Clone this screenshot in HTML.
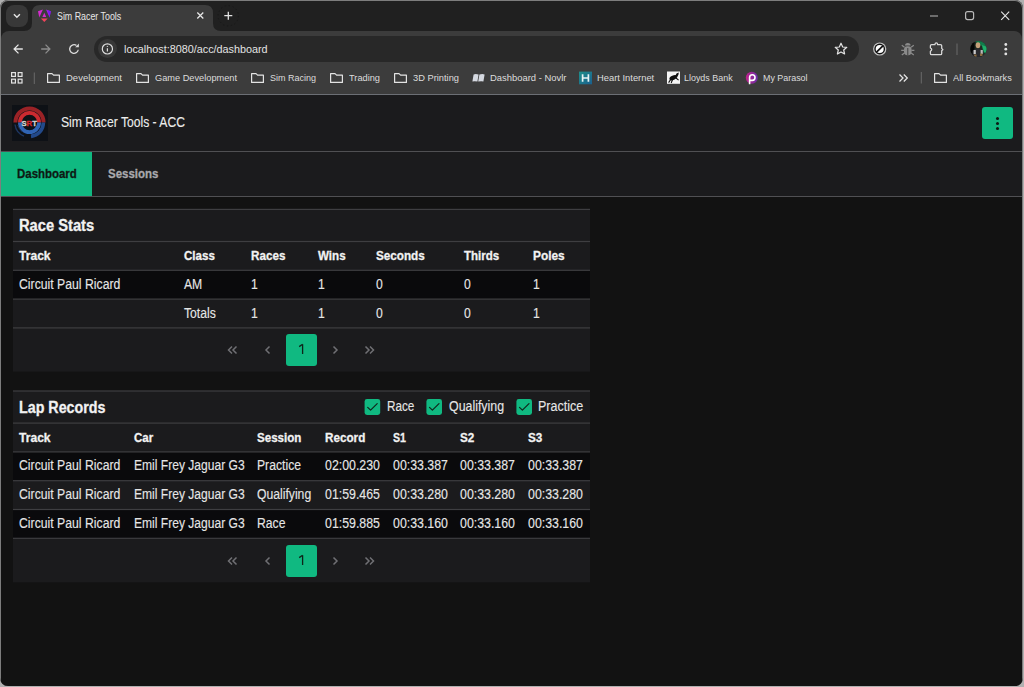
<!DOCTYPE html>
<html><head><meta charset="utf-8">
<style>
*{box-sizing:border-box;margin:0;padding:0}
html,body{width:1024px;height:687px;overflow:hidden;background:#b0b0b0;font-family:"Liberation Sans",sans-serif}
.a{position:absolute}
#win{position:absolute;left:0;top:0;width:1023px;height:686px;background:#202020;border-radius:8px;overflow:hidden;box-shadow:inset 0 0 0 1px #7d7d7d}
.t{position:absolute;white-space:nowrap;line-height:normal;transform-origin:0 0}
.t.bd{-webkit-text-stroke:0.3px currentColor}
.t.rg{-webkit-text-stroke:0.12px currentColor}
svg{position:absolute;overflow:visible}
.card{position:absolute;left:13px;width:577px;background:#1b1b1d}
.ln{position:absolute;left:0;width:100%;height:1px;background:#3b3b3e}
.dk{position:absolute;left:0;width:100%;height:28px;background:#0c0c0e}
.chev{position:absolute}
.gbtn{position:absolute;left:273px;width:31px;height:32px;background:#10b981;border-radius:3px}
.cb{position:absolute;top:399px;width:16px;height:16px;background:#10b981;border-radius:3px}
</style></head><body>
<div id="win">
 <!-- tab strip -->
 <div class="a" style="left:6px;top:5px;width:22px;height:22px;background:#383838;border-radius:8px"></div>
 <svg style="left:0;top:0" width="1024" height="40">
  <path d="M13.9 14.2 L16.9 17.2 L19.9 14.2" stroke="#e3e3e3" stroke-width="1.4" fill="none"/>
 </svg>
 <!-- active tab -->
 <svg style="left:0;top:0" width="260" height="34">
  <path d="M24 31 Q32 31 32 23 L32 13 Q32 5 40 5 L205 5 Q213 5 213 13 L213 23 Q213 31 221 31 Z" fill="#3c3c3c"/>
  <!-- favicon angular -->
  <path d="M38 11.2 L42.9 9.5 L39.3 17.6 Z" fill="#d62ad0"/>
  <path d="M46 9.5 L50.8 11.2 L49.6 17.6 Z" fill="#a222e6"/>
  <path d="M47.6 10.2 L50.8 11.2 L49.6 17.6 Z" fill="#7a1af0"/>
  <path d="M44.3 12.8 L46.2 16.9 L42.4 16.9 Z" fill="#d82ad0"/>
  <path d="M40.9 18.5 L47.7 18.5 L44.3 22 Z" fill="#f0445a"/>
  <!-- close x -->
  <path d="M197.3 12.5 L203.3 18.5 M203.3 12.5 L197.3 18.5" stroke="#e3e3e3" stroke-width="1.3"/>
  <!-- plus -->
  <path d="M228.3 11.7 L228.3 19.7 M224.3 15.7 L232.3 15.7" stroke="#e3e3e3" stroke-width="1.3"/>
  <circle cx="228.3" cy="15.8" r="10.2" stroke="#161616" stroke-width="0.6" stroke-dasharray="1.5 2.5" fill="none"/>
 </svg>
 <!-- window controls -->
 <svg style="left:0;top:0" width="1024" height="34">
  <path d="M930 16 L938 16" stroke="#b8b8b8" stroke-width="1.2"/>
  <rect x="965.6" y="11.6" width="8" height="8" rx="2" stroke="#b8b8b8" stroke-width="1.2" fill="none"/>
  <path d="M1001.2 11.6 L1009.2 19.8 M1009.2 11.6 L1001.2 19.8" stroke="#e6e6e6" stroke-width="1.1"/>
 </svg>

 <!-- toolbar + bookmarks -->
 <div class="a" style="left:1px;top:31px;width:1021px;height:63px;background:#3c3c3c;border-radius:8px 8px 0 0"></div>
 <div class="a" style="left:1px;top:94px;width:1021px;height:1px;background:#6c6f75"></div>
 <svg style="left:0;top:0" width="1024" height="100">
  <!-- back -->
  <path d="M14.2 49 L22.8 49 M18.5 44.6 L14.1 49 L18.5 53.4" stroke="#e3e3e3" stroke-width="1.3" fill="none"/>
  <!-- forward -->
  <path d="M41.2 49 L49.8 49 M45.5 44.6 L49.9 49 L45.5 53.4" stroke="#8a8a8a" stroke-width="1.3" fill="none"/>
  <!-- reload -->
  <path d="M78.25 49.75 A4.3 4.3 0 1 1 76.4 45.4" stroke="#dcdcdc" stroke-width="1.3" fill="none"/>
  <path d="M78.9 43.6 L78.9 47.3 L75.2 47.3 Z" fill="#dcdcdc"/>
 </svg>
 <!-- omnibox -->
 <div class="a" style="left:94px;top:36px;width:765px;height:26px;background:#282828;border-radius:13px"></div>
 <div class="a" style="left:97.9px;top:39.4px;width:19px;height:19px;background:#383838;border-radius:10px"></div>
 <svg style="left:0;top:0" width="1024" height="100">
  <circle cx="107.4" cy="48.9" r="5.1" stroke="#dcdcdc" stroke-width="1.2" fill="none"/>
  <path d="M107.4 48.3 L107.4 51.6" stroke="#dcdcdc" stroke-width="1.2"/>
  <circle cx="107.4" cy="46.4" r="0.7" fill="#bdbdbd"/>
  <!-- star -->
  <path d="M841 43.2 L842.7 47 L846.8 47.3 L843.7 50 L844.6 54 L841 51.9 L837.4 54 L838.3 50 L835.2 47.3 L839.3 47 Z" stroke="#e3e3e3" stroke-width="1.2" fill="none" stroke-linejoin="round"/>
  <!-- block icon -->
  <circle cx="879.7" cy="49" r="6.6" fill="#c4c4c4"/>
  <circle cx="879.7" cy="49" r="5.4" fill="#111111"/>
  <circle cx="879.7" cy="49" r="4.0" fill="#ffffff"/>
  <path d="M876.5 52.2 L882.9 45.8" stroke="#111111" stroke-width="1.7"/>
  <!-- bug -->
  <g fill="#8a8a8a">
   <path d="M905 45.6 Q905 42.9 907.8 42.9 Q910.6 42.9 910.6 45.6 Z"/>
   <rect x="904" y="46.3" width="7.6" height="8.9" rx="3.4"/>
  </g>
  <path d="M907.8 48 L907.8 55.2" stroke="#3c3c3c" stroke-width="1"/>
  <path d="M901.8 45.3 L904.5 47.3 M913.8 45.3 L911.1 47.3 M901.2 50.3 L904.2 50.3 M914.4 50.3 L911.4 50.3 M901.8 55 L904.5 53 M913.8 55 L911.1 53" stroke="#8a8a8a" stroke-width="1.3"/>
  <!-- puzzle -->
  <path d="M931.6 44.6 L934.9 44.6 Q935.1 42.9 936.3 42.9 Q937.5 42.9 937.7 44.6 L940.5 44.6 Q941.7 44.6 941.7 45.8 L941.7 48.4 L942.9 49.6 L941.7 50.8 L941.7 53.4 Q941.7 54.7 940.5 54.7 L931.6 54.7 Q930.4 54.7 930.4 53.4 L930.4 51.3 Q931.7 50.6 931.7 49.6 Q931.7 48.6 930.4 47.9 L930.4 45.8 Q930.4 44.6 931.6 44.6 Z" stroke="#d8d8d8" stroke-width="1.3" fill="none" stroke-linejoin="round"/>
  <!-- sep -->
  <path d="M957 43.5 L957 55" stroke="#6a6a6a" stroke-width="1"/>
  <!-- menu dots -->
  <circle cx="1005.8" cy="44.5" r="1.4" fill="#e3e3e3"/>
  <circle cx="1005.8" cy="49.2" r="1.4" fill="#e3e3e3"/>
  <circle cx="1005.8" cy="53.9" r="1.4" fill="#e3e3e3"/>
 </svg>
 <!-- avatar -->
 <svg style="left:0;top:0" width="1024" height="100">
  <defs><clipPath id="avc"><circle cx="978.4" cy="49" r="8.1"/></clipPath></defs>
  <g clip-path="url(#avc)">
   <rect x="970" y="40" width="17" height="18" fill="#1e2a22"/>
   <path d="M974 40 L987 40 L987 55 L983 52 L982 46 L978 44 Z" fill="#127a4a"/>
   <path d="M982 45 L987 47 L987 53 L984 52 Z" fill="#1fae6a"/>
   <rect x="970" y="40" width="4.5" height="18" fill="#050505"/>
   <ellipse cx="978" cy="45.3" rx="2.3" ry="3" fill="#c4a07a"/>
   <path d="M972.5 58 L972.5 51 Q974 48.5 978 48.5 Q982 48.5 983.5 51 L983.5 58 Z" fill="#2a2a2e"/>
   <rect x="973.6" y="50" width="2.2" height="4" fill="#c8c8c8"/>
   <rect x="980.6" y="50" width="2.2" height="4" fill="#b8b8b8"/>
   <rect x="974" y="54.5" width="2.5" height="2.5" fill="#8a6a40"/>
   <rect x="980" y="53.5" width="2.5" height="2.5" fill="#8a6a40"/>
  </g>
 </svg>

 <!-- bookmarks icons -->
 <svg style="left:0;top:0" width="1024" height="100">
  <g stroke="#e3e3e3" stroke-width="1.2" fill="none">
   <rect x="11.6" y="72.6" width="3.8" height="3.8"/>
   <rect x="18.2" y="72.6" width="3.8" height="3.8"/>
   <rect x="11.6" y="79.2" width="3.8" height="3.8"/>
   <rect x="18.2" y="79.2" width="3.8" height="3.8"/>
  </g>
  <path d="M34.3 72.5 L34.3 84" stroke="#6a6a6a"/>
  <g id="fold" stroke="#e3e3e3" stroke-width="1.2" fill="none" stroke-linejoin="round">
   <path d="M47.6 73.6 L52 73.6 L53.6 75.2 L59.4 75.2 L59.4 82.4 L47.6 82.4 Z"/>
   <path d="M136.6 73.6 L141 73.6 L142.6 75.2 L148.4 75.2 L148.4 82.4 L136.6 82.4 Z"/>
   <path d="M251.6 73.6 L256 73.6 L257.6 75.2 L263.4 75.2 L263.4 82.4 L251.6 82.4 Z"/>
   <path d="M330.6 73.6 L335 73.6 L336.6 75.2 L342.4 75.2 L342.4 82.4 L330.6 82.4 Z"/>
   <path d="M394.6 73.6 L399 73.6 L400.6 75.2 L406.4 75.2 L406.4 82.4 L394.6 82.4 Z"/>
   <path d="M934.6 73.6 L939 73.6 L940.6 75.2 L946.4 75.2 L946.4 82.4 L934.6 82.4 Z"/>
  </g>
  <!-- novlr book -->
  <path d="M473.6 74.4 Q476 73.6 478.6 74.6 L477.4 81.6 Q475 80.8 472.4 81.4 Z" fill="#d4d8e0"/>
  <path d="M479.4 74.6 Q482 73.6 484.6 74.4 L483.4 81.4 Q480.8 80.8 478.2 81.6 Z" fill="#d4d8e0"/>
  <!-- heart internet -->
  <defs><linearGradient id="hig" x1="0" y1="0" x2="1" y2="1"><stop offset="0" stop-color="#1f8f8a"/><stop offset="1" stop-color="#1a5f8e"/></linearGradient>
  <linearGradient id="pag" x1="0" y1="0" x2="1" y2="0"><stop offset="0" stop-color="#c0208a"/><stop offset="1" stop-color="#6a2ea8"/></linearGradient></defs>
  <rect x="579" y="71.6" width="13" height="12.7" fill="url(#hig)"/>
  <path d="M582.6 74.2 L582.6 81.8 M588.4 74.2 L588.4 81.8 M582.6 78 L588.4 78" stroke="#e8f4f4" stroke-width="1.7"/>
  <!-- lloyds -->
  <rect x="667" y="71.5" width="13" height="12.3" fill="#f4f4f4"/>
  <ellipse cx="673.2" cy="77.8" rx="4" ry="2.2" transform="rotate(-25 673.2 77.8)" fill="#101010"/>
  <path d="M675 76.5 L676.5 73.5 L678.8 72.6 L678.4 74.8 L677 77.5 Z" fill="#101010"/>
  <path d="M676 78 L678.6 80.2 M671 79 L668.6 82.6 M672.6 79.4 L671.2 83" stroke="#101010" stroke-width="1.1" fill="none"/>
  <!-- parasol -->
  <circle cx="751.8" cy="77.8" r="6" fill="url(#pag)"/>
  <path d="M749.6 84.2 L749.6 77.6 Q749.6 74.8 752.3 74.8 Q755 74.8 755 77.6 Q755 80.4 752.3 80.4 L749.6 80.4" stroke="#ffffff" stroke-width="1.6" fill="none"/>
  <!-- chevrons >> -->
  <path d="M899.5 74.5 L903 78 L899.5 81.5 M903.8 74.5 L907.3 78 L903.8 81.5" stroke="#e3e3e3" stroke-width="1.3" fill="none"/>
  <path d="M921.3 72 L921.3 83.5" stroke="#6a6a6a"/>
 </svg>

 <!-- ================= page ================= -->
 <div class="a" style="left:1px;top:95px;width:1021px;height:591px;background:#121212"></div>
 <div class="a" style="left:1px;top:95px;width:1021px;height:56px;background:#1b1b1d"></div>
 <div class="a" style="left:1px;top:151px;width:1021px;height:1px;background:#505053"></div>
 <div class="a" style="left:1px;top:152px;width:1021px;height:44px;background:#1b1b1d"></div>
 <div class="a" style="left:1px;top:152px;width:91px;height:44px;background:#10b981"></div>
 <div class="a" style="left:1px;top:196px;width:1021px;height:1px;background:#505053"></div>

 <!-- logo -->
 <div class="a" style="left:12px;top:105px;width:36px;height:36px;background:#0e1116"></div>
 <svg style="left:12px;top:105px" width="36" height="36" viewBox="0 0 36 36">
  <path d="M3.4 17.5 A14.1 14.1 0 0 1 31.6 17.5" stroke="#9a2226" stroke-width="4" fill="none"/>
  <path d="M7.9 17.5 A9.6 9.6 0 0 1 27.1 17.5" stroke="#cc2a30" stroke-width="3.8" fill="none"/>
  <path d="M7.9 17.5 A9.6 9.6 0 0 0 27.1 17.5" stroke="#3064b4" stroke-width="3.8" fill="none"/>
  <path d="M31.4 17.5 A13.9 13.9 0 0 1 19 31.4" stroke="#22498a" stroke-width="3.6" fill="none"/>
  <path d="M3 19.5 A14.6 14.6 0 0 0 12 31.2" stroke="#1d3560" stroke-width="1.4" fill="none"/>
  <path d="M5.8 20 A12 12 0 0 0 10.5 27" stroke="#1d3560" stroke-width="1" fill="none"/>
  <g font-family="Liberation Sans" font-weight="bold" font-size="7.8" stroke-width="0.3">
  <text x="9.4" y="20.8" fill="#d4d4d4" stroke="#d4d4d4">S</text>
  <text x="14.6" y="20.8" fill="#d8262c" stroke="#d8262c">R</text>
  <text x="20.2" y="20.8" fill="#d4d4d4" stroke="#d4d4d4">T</text>
  </g>
 </svg>

 <!-- menu btn -->
 <div class="a" style="left:982px;top:107px;width:31px;height:32px;background:#10b981;border-radius:3px"></div>
 <div class="a" style="left:996.2px;top:116.5px;width:3px;height:3px;border-radius:50%;background:#0d1a14"></div>
 <div class="a" style="left:996.2px;top:121.5px;width:3px;height:3px;border-radius:50%;background:#0d1a14"></div>
 <div class="a" style="left:996.2px;top:126.5px;width:3px;height:3px;border-radius:50%;background:#0d1a14"></div>

 <!-- cards -->
 <svg style="left:0;top:0" width="1024" height="687">
   <rect x="13" y="209.4" width="577" height="162.2" fill="#1b1b1d"/>
   <rect x="13" y="270.2" width="577" height="28.8" fill="#0a0a0c"/>
   <rect x="13" y="208.80" width="577" height="1.2" fill="#3e3e41"/>
   <rect x="13" y="240.90" width="577" height="1.2" fill="#3e3e41"/>
   <rect x="13" y="269.70" width="577" height="1.2" fill="#3e3e41"/>
   <rect x="13" y="298.50" width="577" height="1.2" fill="#3e3e41"/>
   <rect x="13" y="327.30" width="577" height="1.2" fill="#3e3e41"/>
   <g stroke="#707074" stroke-width="1.5" fill="none">
    <path d="M232 346.5 L228.5 350 L232 353.5 M236.5 346.5 L233 350 L236.5 353.5"/>
    <path d="M269.5 346.5 L266 350 L269.5 353.5"/>
    <path d="M333.5 346.5 L337 350 L333.5 353.5"/>
    <path d="M365.5 346.5 L369 350 L365.5 353.5 M370 346.5 L373.5 350 L370 353.5"/>
   </g>
   <rect x="286" y="334" width="31" height="32" rx="3" fill="#10b981"/>
   <path d="M302.6 344.3 L302.6 354 M299.2 346.6 L302.6 344.3" stroke="#0e2419" stroke-width="1.3" fill="none"/>

   <rect x="13" y="391" width="577" height="191.4" fill="#1b1b1d"/>
   <rect x="13" y="451.9" width="577" height="28.8" fill="#0a0a0c"/>
   <rect x="13" y="509.5" width="577" height="28.8" fill="#0a0a0c"/>
   <rect x="13" y="390.40" width="577" height="1.2" fill="#3e3e41"/>
   <rect x="13" y="422.50" width="577" height="1.2" fill="#3e3e41"/>
   <rect x="13" y="451.30" width="577" height="1.2" fill="#3e3e41"/>
   <rect x="13" y="480.10" width="577" height="1.2" fill="#3e3e41"/>
   <rect x="13" y="508.90" width="577" height="1.2" fill="#3e3e41"/>
   <rect x="13" y="537.70" width="577" height="1.2" fill="#3e3e41"/>
   <g stroke="#707074" stroke-width="1.5" fill="none">
    <path d="M232 557.5 L228.5 561 L232 564.5 M236.5 557.5 L233 561 L236.5 564.5"/>
    <path d="M269.5 557.5 L266 561 L269.5 564.5"/>
    <path d="M333.5 557.5 L337 561 L333.5 564.5"/>
    <path d="M365.5 557.5 L369 561 L365.5 564.5 M370 557.5 L373.5 561 L370 564.5"/>
   </g>
   <rect x="286" y="545" width="31" height="32" rx="3" fill="#10b981"/>
   <path d="M302.6 555.3 L302.6 565 M299.2 557.6 L302.6 555.3" stroke="#0e2419" stroke-width="1.3" fill="none"/>

 </svg>
 <svg style="left:0;top:0" width="1024" height="687">
  <g fill="#10b981">
   <rect x="364.6" y="399.1" width="15.6" height="15.8" rx="2.4"/>
   <rect x="426.4" y="399.1" width="15.6" height="15.8" rx="2.4"/>
   <rect x="516.4" y="399.1" width="15.6" height="15.8" rx="2.4"/>
  </g>
  <g stroke="#10261c" stroke-width="1.2" fill="none" stroke-linecap="round" stroke-linejoin="round">
   <path d="M367.7 407.3 L370.6 410.2 L377.2 403.6"/>
   <path d="M429.5 407.3 L432.4 410.2 L439 403.6"/>
   <path d="M519.5 407.3 L522.4 410.2 L529 403.6"/>
  </g>
 </svg>

<div class="t" style="left:56.9px;top:10.0px;font-size:10.5px;font-weight:400;color:#e8e8e8;transform:scaleX(0.842)">Sim Racer Tools</div>
<div class="t" style="left:123.5px;top:43.0px;font-size:11.5px;font-weight:400;color:#e3e3e3;transform:scaleX(0.940)">localhost:8080/acc/dashboard</div>
<div class="t" style="left:66.0px;top:72.3px;font-size:9.5px;font-weight:400;color:#dcdcdc;transform:scaleX(1.000)">Development</div>
<div class="t" style="left:155.0px;top:72.3px;font-size:9.5px;font-weight:400;color:#dcdcdc;transform:scaleX(0.971)">Game Development</div>
<div class="t" style="left:270.0px;top:72.3px;font-size:9.5px;font-weight:400;color:#dcdcdc;transform:scaleX(0.947)">Sim Racing</div>
<div class="t" style="left:349.0px;top:72.3px;font-size:9.5px;font-weight:400;color:#dcdcdc;transform:scaleX(0.973)">Trading</div>
<div class="t" style="left:413.0px;top:72.3px;font-size:9.5px;font-weight:400;color:#dcdcdc;transform:scaleX(0.979)">3D Printing</div>
<div class="t" style="left:489.5px;top:72.3px;font-size:9.5px;font-weight:400;color:#dcdcdc;transform:scaleX(0.992)">Dashboard - Novlr</div>
<div class="t" style="left:596.8px;top:72.3px;font-size:9.5px;font-weight:400;color:#dcdcdc;transform:scaleX(0.985)">Heart Internet</div>
<div class="t" style="left:684.0px;top:72.3px;font-size:9.5px;font-weight:400;color:#dcdcdc;transform:scaleX(0.939)">Lloyds Bank</div>
<div class="t" style="left:763.0px;top:72.3px;font-size:9.5px;font-weight:400;color:#dcdcdc;transform:scaleX(0.937)">My Parasol</div>
<div class="t" style="left:953.0px;top:72.3px;font-size:9.5px;font-weight:400;color:#dcdcdc;transform:scaleX(0.968)">All Bookmarks</div>
<div class="t rg" style="left:60.5px;top:114.0px;font-size:14px;font-weight:400;color:#ececec;transform:scaleX(0.868)">Sim Racer Tools - ACC</div>
<div class="t bd" style="left:16.6px;top:165.5px;font-size:13px;font-weight:700;color:#0d1a14;transform:scaleX(0.881)">Dashboard</div>
<div class="t bd" style="left:108.0px;top:165.5px;font-size:13px;font-weight:700;color:#a9a9ad;transform:scaleX(0.883)">Sessions</div>
<div class="t bd" style="left:19.4px;top:217.0px;font-size:16px;font-weight:700;color:#f2f2f2;transform:scaleX(0.919)">Race Stats</div>
<div class="t bd" style="left:19.4px;top:248.0px;font-size:13px;font-weight:700;color:#f2f2f2;transform:scaleX(0.930)">Track</div>
<div class="t bd" style="left:183.9px;top:248.0px;font-size:13px;font-weight:700;color:#f2f2f2;transform:scaleX(0.890)">Class</div>
<div class="t bd" style="left:251.2px;top:248.0px;font-size:13px;font-weight:700;color:#f2f2f2;transform:scaleX(0.898)">Races</div>
<div class="t bd" style="left:318.4px;top:248.0px;font-size:13px;font-weight:700;color:#f2f2f2;transform:scaleX(0.892)">Wins</div>
<div class="t bd" style="left:376.0px;top:248.0px;font-size:13px;font-weight:700;color:#f2f2f2;transform:scaleX(0.900)">Seconds</div>
<div class="t bd" style="left:464.2px;top:248.0px;font-size:13px;font-weight:700;color:#f2f2f2;transform:scaleX(0.886)">Thirds</div>
<div class="t bd" style="left:532.9px;top:248.0px;font-size:13px;font-weight:700;color:#f2f2f2;transform:scaleX(0.911)">Poles</div>
<div class="t rg" style="left:19.4px;top:276.0px;font-size:14px;font-weight:400;color:#e6e6e6;transform:scaleX(0.874)">Circuit Paul Ricard</div>
<div class="t rg" style="left:183.9px;top:276.0px;font-size:14px;font-weight:400;color:#e6e6e6;transform:scaleX(0.870)">AM</div>
<div class="t rg" style="left:251.2px;top:276.0px;font-size:14px;font-weight:400;color:#e6e6e6;transform:scaleX(0.870)">1</div>
<div class="t rg" style="left:318.4px;top:276.0px;font-size:14px;font-weight:400;color:#e6e6e6;transform:scaleX(0.870)">1</div>
<div class="t rg" style="left:376.0px;top:276.0px;font-size:14px;font-weight:400;color:#e6e6e6;transform:scaleX(0.870)">0</div>
<div class="t rg" style="left:464.2px;top:276.0px;font-size:14px;font-weight:400;color:#e6e6e6;transform:scaleX(0.870)">0</div>
<div class="t rg" style="left:532.9px;top:276.0px;font-size:14px;font-weight:400;color:#e6e6e6;transform:scaleX(0.870)">1</div>
<div class="t rg" style="left:183.9px;top:305.0px;font-size:14px;font-weight:400;color:#e6e6e6;transform:scaleX(0.870)">Totals</div>
<div class="t rg" style="left:251.2px;top:305.0px;font-size:14px;font-weight:400;color:#e6e6e6;transform:scaleX(0.870)">1</div>
<div class="t rg" style="left:318.4px;top:305.0px;font-size:14px;font-weight:400;color:#e6e6e6;transform:scaleX(0.870)">1</div>
<div class="t rg" style="left:376.0px;top:305.0px;font-size:14px;font-weight:400;color:#e6e6e6;transform:scaleX(0.870)">0</div>
<div class="t rg" style="left:464.2px;top:305.0px;font-size:14px;font-weight:400;color:#e6e6e6;transform:scaleX(0.870)">0</div>
<div class="t rg" style="left:532.9px;top:305.0px;font-size:14px;font-weight:400;color:#e6e6e6;transform:scaleX(0.870)">1</div>
<div class="t bd" style="left:19.4px;top:399.0px;font-size:16px;font-weight:700;color:#f2f2f2;transform:scaleX(0.892)">Lap Records</div>
<div class="t rg" style="left:386.6px;top:398.0px;font-size:14px;font-weight:400;color:#e6e6e6;transform:scaleX(0.838)">Race</div>
<div class="t rg" style="left:448.7px;top:398.0px;font-size:14px;font-weight:400;color:#e6e6e6;transform:scaleX(0.885)">Qualifying</div>
<div class="t rg" style="left:538.3px;top:398.0px;font-size:14px;font-weight:400;color:#e6e6e6;transform:scaleX(0.894)">Practice</div>
<div class="t bd" style="left:19.4px;top:430.0px;font-size:13px;font-weight:700;color:#f2f2f2;transform:scaleX(0.930)">Track</div>
<div class="t bd" style="left:133.6px;top:430.0px;font-size:13px;font-weight:700;color:#f2f2f2;transform:scaleX(0.885)">Car</div>
<div class="t bd" style="left:256.6px;top:430.0px;font-size:13px;font-weight:700;color:#f2f2f2;transform:scaleX(0.891)">Session</div>
<div class="t bd" style="left:324.6px;top:430.0px;font-size:13px;font-weight:700;color:#f2f2f2;transform:scaleX(0.900)">Record</div>
<div class="t bd" style="left:392.6px;top:430.0px;font-size:13px;font-weight:700;color:#f2f2f2;transform:scaleX(0.817)">S1</div>
<div class="t bd" style="left:460.2px;top:430.0px;font-size:13px;font-weight:700;color:#f2f2f2;transform:scaleX(0.900)">S2</div>
<div class="t bd" style="left:528.0px;top:430.0px;font-size:13px;font-weight:700;color:#f2f2f2;transform:scaleX(0.900)">S3</div>
<div class="t rg" style="left:19.4px;top:457.0px;font-size:14px;font-weight:400;color:#e6e6e6;transform:scaleX(0.874)">Circuit Paul Ricard</div>
<div class="t rg" style="left:133.6px;top:457.0px;font-size:14px;font-weight:400;color:#e6e6e6;transform:scaleX(0.862)">Emil Frey Jaguar G3</div>
<div class="t rg" style="left:256.6px;top:457.0px;font-size:14px;font-weight:400;color:#e6e6e6;transform:scaleX(0.870)">Practice</div>
<div class="t rg" style="left:324.6px;top:457.0px;font-size:14px;font-weight:400;color:#e6e6e6;transform:scaleX(0.883)">02:00.230</div>
<div class="t rg" style="left:392.6px;top:457.0px;font-size:14px;font-weight:400;color:#e6e6e6;transform:scaleX(0.883)">00:33.387</div>
<div class="t rg" style="left:460.2px;top:457.0px;font-size:14px;font-weight:400;color:#e6e6e6;transform:scaleX(0.883)">00:33.387</div>
<div class="t rg" style="left:528.0px;top:457.0px;font-size:14px;font-weight:400;color:#e6e6e6;transform:scaleX(0.883)">00:33.387</div>
<div class="t rg" style="left:19.4px;top:486.0px;font-size:14px;font-weight:400;color:#e6e6e6;transform:scaleX(0.874)">Circuit Paul Ricard</div>
<div class="t rg" style="left:133.6px;top:486.0px;font-size:14px;font-weight:400;color:#e6e6e6;transform:scaleX(0.862)">Emil Frey Jaguar G3</div>
<div class="t rg" style="left:256.6px;top:486.0px;font-size:14px;font-weight:400;color:#e6e6e6;transform:scaleX(0.870)">Qualifying</div>
<div class="t rg" style="left:324.6px;top:486.0px;font-size:14px;font-weight:400;color:#e6e6e6;transform:scaleX(0.883)">01:59.465</div>
<div class="t rg" style="left:392.6px;top:486.0px;font-size:14px;font-weight:400;color:#e6e6e6;transform:scaleX(0.883)">00:33.280</div>
<div class="t rg" style="left:460.2px;top:486.0px;font-size:14px;font-weight:400;color:#e6e6e6;transform:scaleX(0.883)">00:33.280</div>
<div class="t rg" style="left:528.0px;top:486.0px;font-size:14px;font-weight:400;color:#e6e6e6;transform:scaleX(0.883)">00:33.280</div>
<div class="t rg" style="left:19.4px;top:515.0px;font-size:14px;font-weight:400;color:#e6e6e6;transform:scaleX(0.874)">Circuit Paul Ricard</div>
<div class="t rg" style="left:133.6px;top:515.0px;font-size:14px;font-weight:400;color:#e6e6e6;transform:scaleX(0.862)">Emil Frey Jaguar G3</div>
<div class="t rg" style="left:256.6px;top:515.0px;font-size:14px;font-weight:400;color:#e6e6e6;transform:scaleX(0.870)">Race</div>
<div class="t rg" style="left:324.6px;top:515.0px;font-size:14px;font-weight:400;color:#e6e6e6;transform:scaleX(0.883)">01:59.885</div>
<div class="t rg" style="left:392.6px;top:515.0px;font-size:14px;font-weight:400;color:#e6e6e6;transform:scaleX(0.883)">00:33.160</div>
<div class="t rg" style="left:460.2px;top:515.0px;font-size:14px;font-weight:400;color:#e6e6e6;transform:scaleX(0.883)">00:33.160</div>
<div class="t rg" style="left:528.0px;top:515.0px;font-size:14px;font-weight:400;color:#e6e6e6;transform:scaleX(0.883)">00:33.160</div>
</div>
</body></html>
